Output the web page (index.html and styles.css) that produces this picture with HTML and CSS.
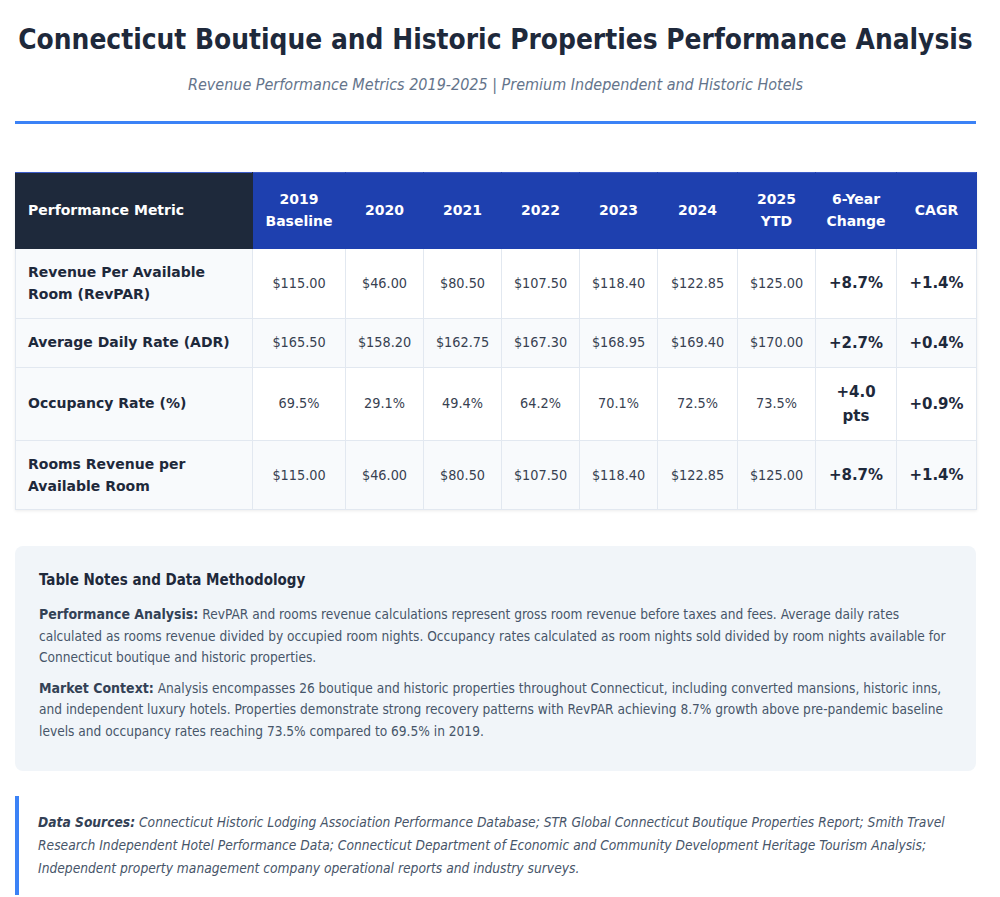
FILE: index.html
```html
<!DOCTYPE html>
<html lang="en">
<head>
<meta charset="utf-8">
<title>Connecticut Boutique and Historic Properties Performance Analysis</title>
<link rel="stylesheet" href="styles.css">
</head>
<body>
<div class="page">
  <header class="report-header">
    <h1 class="title">Connecticut Boutique and Historic Properties Performance Analysis</h1>
    <p class="subtitle">Revenue Performance Metrics 2019-2025 | Premium Independent and Historic Hotels</p>
  </header>

  <table class="metrics">
    <colgroup>
      <col class="c-metric"><col class="c-2019"><col class="c-yr"><col class="c-yr"><col class="c-yr"><col class="c-yr"><col class="c-yr2"><col class="c-yr"><col class="c-chg"><col class="c-cagr">
    </colgroup>
    <thead>
      <tr>
        <th class="th-metric">Performance Metric</th>
        <th>2019<br>Baseline</th>
        <th>2020</th>
        <th>2021</th>
        <th>2022</th>
        <th>2023</th>
        <th>2024</th>
        <th>2025<br>YTD</th>
        <th>6-Year<br>Change</th>
        <th>CAGR</th>
      </tr>
    </thead>
    <tbody>
      <tr>
        <td class="metric">Revenue Per Available Room (RevPAR)</td>
        <td>$115.00</td><td>$46.00</td><td>$80.50</td><td>$107.50</td><td>$118.40</td><td>$122.85</td><td>$125.00</td>
        <td class="chg">+8.7%</td><td class="chg">+1.4%</td>
      </tr>
      <tr>
        <td class="metric">Average Daily Rate (ADR)</td>
        <td>$165.50</td><td>$158.20</td><td>$162.75</td><td>$167.30</td><td>$168.95</td><td>$169.40</td><td>$170.00</td>
        <td class="chg">+2.7%</td><td class="chg">+0.4%</td>
      </tr>
      <tr>
        <td class="metric">Occupancy Rate (%)</td>
        <td>69.5%</td><td>29.1%</td><td>49.4%</td><td>64.2%</td><td>70.1%</td><td>72.5%</td><td>73.5%</td>
        <td class="chg">+4.0<br>pts</td><td class="chg">+0.9%</td>
      </tr>
      <tr>
        <td class="metric">Rooms Revenue per Available Room</td>
        <td>$115.00</td><td>$46.00</td><td>$80.50</td><td>$107.50</td><td>$118.40</td><td>$122.85</td><td>$125.00</td>
        <td class="chg">+8.7%</td><td class="chg">+1.4%</td>
      </tr>
    </tbody>
  </table>

  <section class="notes">
    <h2 class="notes-title">Table Notes and Data Methodology</h2>
    <p><strong>Performance Analysis:</strong> RevPAR and rooms revenue calculations represent gross room revenue before taxes and fees. Average daily rates calculated as rooms revenue divided by occupied room nights. Occupancy rates calculated as room nights sold divided by room nights available for Connecticut boutique and historic properties.</p>
    <p><strong>Market Context:</strong> Analysis encompasses 26 boutique and historic properties throughout Connecticut, including converted mansions, historic inns, and independent luxury hotels. Properties demonstrate strong recovery patterns with RevPAR achieving 8.7% growth above pre-pandemic baseline levels and occupancy rates reaching 73.5% compared to 69.5% in 2019.</p>
  </section>

  <footer class="sources">
    <p><strong>Data Sources:</strong> Connecticut Historic Lodging Association Performance Database; STR Global Connecticut Boutique Properties Report; Smith Travel Research Independent Hotel Performance Data; Connecticut Department of Economic and Community Development Heritage Tourism Analysis; Independent property management company operational reports and industry surveys.</p>
  </footer>
</div>
</body>
</html>
```

FILE: styles.css
```css
html, body {
  margin: 0;
  padding: 0;
  background: #ffffff;
}
body {
  font-family: "DejaVu Sans Condensed", "DejaVu Sans", sans-serif;
  color: #334155;
}
.page {
  width: 961px;
  margin-left: 15px;
  padding-top: 23px;
}
.report-header {
  text-align: center;
  padding-bottom: 25px;
  border-bottom: 3px solid #3b82f6;
  margin-bottom: 48px;
}
.title {
  margin: 0 0 17px;
  font-size: 27.8px;
  line-height: 34px;
  font-weight: 700;
  color: #1e293b;
  white-space: nowrap;
}
.subtitle {
  margin: 0;
  font-size: 16px;
  line-height: 22px;
  font-style: italic;
  color: #64748b;
}
.metrics {
  width: 961px;
  border-collapse: collapse;
  table-layout: fixed;
  font-size: 14.3px;
  line-height: 22.4px;
  box-shadow: 0 1px 3px rgba(0,0,0,0.08);
}
.c-metric { width: 237px; }
.c-2019 { width: 93px; }
.c-yr { width: 78px; }
.c-yr2 { width: 80px; }
.c-chg { width: 81px; }
.c-cagr { width: 80px; }
.metrics th {
  background: #1e40af;
  color: #ffffff;
  font-family: "DejaVu Sans", sans-serif;
  font-size: 14px;
  font-weight: 700;
  text-align: center;
  padding: 15px 4px;
  border: 1px solid #1e40af;
  border-top-color: #3b5bc8;
}
.metrics th.th-metric {
  background: #1e293b;
  border-color: #1e293b;
  border-top-color: #3b5bc8;
  text-align: left;
  padding-left: 12px;
}
.metrics td {
  padding: 12px 4px;
  text-align: center;
  border: 1px solid #e2e8f0;
  background: #ffffff;
  color: #374151;
}
.metrics tbody tr:nth-child(even) td {
  background: #f8fafc;
}
.metrics td.metric {
  text-align: left;
  padding-left: 12px;
  font-family: "DejaVu Sans", sans-serif;
  font-size: 14px;
  font-weight: 700;
  color: #1e293b;
  background: #f8fafc;
}
.metrics td.chg {
  font-family: "DejaVu Sans", sans-serif;
  font-size: 15px;
  line-height: 24px;
  font-weight: 700;
  color: #1e293b;
}
.notes {
  margin-top: 36px;
  background: #f1f5f9;
  border-radius: 8px;
  padding: 24px 24px 20px;
}
.notes-title {
  margin: 0 0 13px;
  font-size: 15px;
  line-height: 21px;
  font-weight: 700;
  color: #1e293b;
}
.notes p {
  margin: 0 0 9px;
  font-size: 13.6px;
  line-height: 21.5px;
  color: #475569;
}
.notes p strong {
  font-size: 14px;
  color: #334155;
}
.sources {
  margin-top: 25px;
  border-left: 4px solid #3b82f6;
  padding: 15px 20px 15px 19px;
}
.sources p {
  margin: 0;
  font-size: 13.7px;
  line-height: 23px;
  font-style: italic;
  color: #475569;
}
.sources strong {
  color: #334155;
}
```
